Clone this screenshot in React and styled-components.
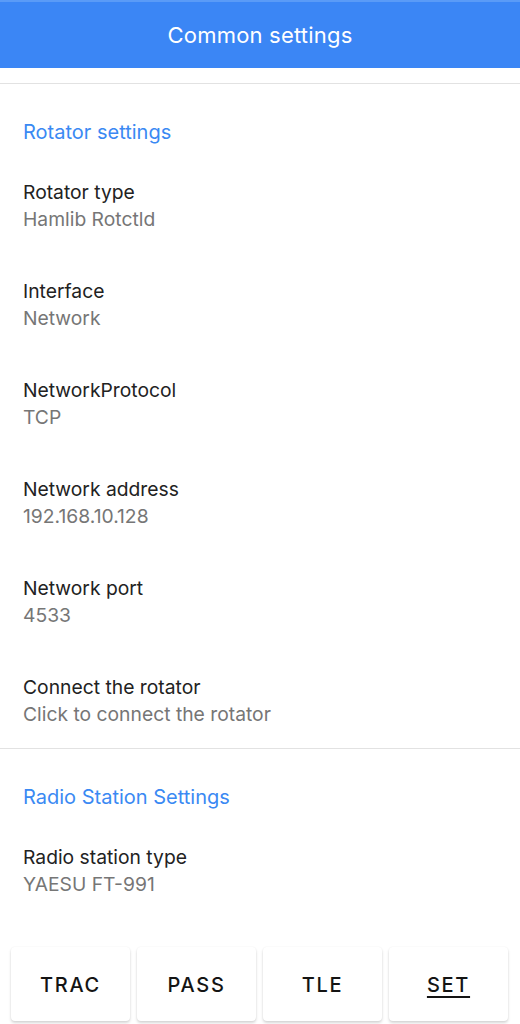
import styled, { createGlobalStyle } from "styled-components";

const GlobalStyle = createGlobalStyle`
  html, body {
    margin: 0;
    padding: 0;
    background: #ffffff;
  }

  body {
    font-family: Inter, "Noto Sans", "Liberation Sans", sans-serif;
    -webkit-font-smoothing: antialiased;
  }
`;

const sections = [
  {
    title: "Rotator settings",
    items: [
      { label: "Rotator type", value: "Hamlib Rotctld" },
      { label: "Interface", value: "Network" },
      { label: "NetworkProtocol", value: "TCP" },
      { label: "Network address", value: "192.168.10.128" },
      { label: "Network port", value: "4533" },
      { label: "Connect the rotator", value: "Click to connect the rotator" },
    ],
  },
  {
    title: "Radio Station Settings",
    items: [{ label: "Radio station type", value: "YAESU FT-991" }],
  },
];

const tabs = ["TRAC", "PASS", "TLE", "SET"];

export default function App() {
  return (
    <>
      <GlobalStyle />
      <Page>
        <Header>Common settings</Header>
        <List>
          {sections.map((section) => (
            <Section key={section.title}>
              <SectionTitle>{section.title}</SectionTitle>
              {section.items.map((item) => (
                <Item key={item.label}>
                  <ItemLabel>{item.label}</ItemLabel>
                  <ItemValue>{item.value}</ItemValue>
                </Item>
              ))}
            </Section>
          ))}
        </List>
        <TabBar>
          {tabs.map((tab) => (
            <TabButton key={tab} $active={tab === "SET"}>
              {tab}
            </TabButton>
          ))}
        </TabBar>
      </Page>
    </>
  );
}

const Page = styled.div`
  min-height: 1024px;
  display: flex;
  flex-direction: column;
  background: #ffffff;
`;

const Header = styled.header`
  height: 66px;
  border-top: 2px solid #5a9bf7;
  background: #3b86f5;
  color: #ffffff;
  display: flex;
  align-items: center;
  justify-content: center;
  font-size: 22px;
  font-weight: 400;
  letter-spacing: 0.2px;
`;

const List = styled.main`
  flex: 1;
  padding-top: 15px;
`;

const Section = styled.section`
  border-top: 1px solid #e2e2e2;
`;

const SectionTitle = styled.h2`
  margin: 0;
  padding: 35px 23px 9px;
  color: #3a89f3;
  font-size: 20px;
  line-height: 26px;
  font-weight: 400;
`;

const Item = styled.div`
  padding: 25px 23px 20px;
  display: flex;
  flex-direction: column;
`;

const ItemLabel = styled.span`
  color: #222222;
  font-size: 19.3px;
  line-height: 27px;
`;

const ItemValue = styled.span`
  color: #767676;
  font-size: 19.3px;
  line-height: 27px;
`;

const TabBar = styled.nav`
  display: grid;
  grid-template-columns: repeat(4, 1fr);
  gap: 7px;
  padding: 0 12px 3px 11px;
`;

const TabButton = styled.button`
  height: 74px;
  padding-top: 2px;
  border: none;
  border-radius: 4px;
  background: #ffffff;
  box-shadow:
    0 2px 3px rgba(0, 0, 0, 0.16),
    0 0 2px rgba(0, 0, 0, 0.06);
  color: #141414;
  font-family: Inter, "Noto Sans", "Liberation Sans", sans-serif;
  font-size: 20px;
  font-weight: 500;
  letter-spacing: 1.7px;
  text-decoration: ${(p) => (p.$active ? "underline" : "none")};
  text-underline-offset: 4px;
  text-decoration-thickness: 1.5px;
  cursor: pointer;
`;
